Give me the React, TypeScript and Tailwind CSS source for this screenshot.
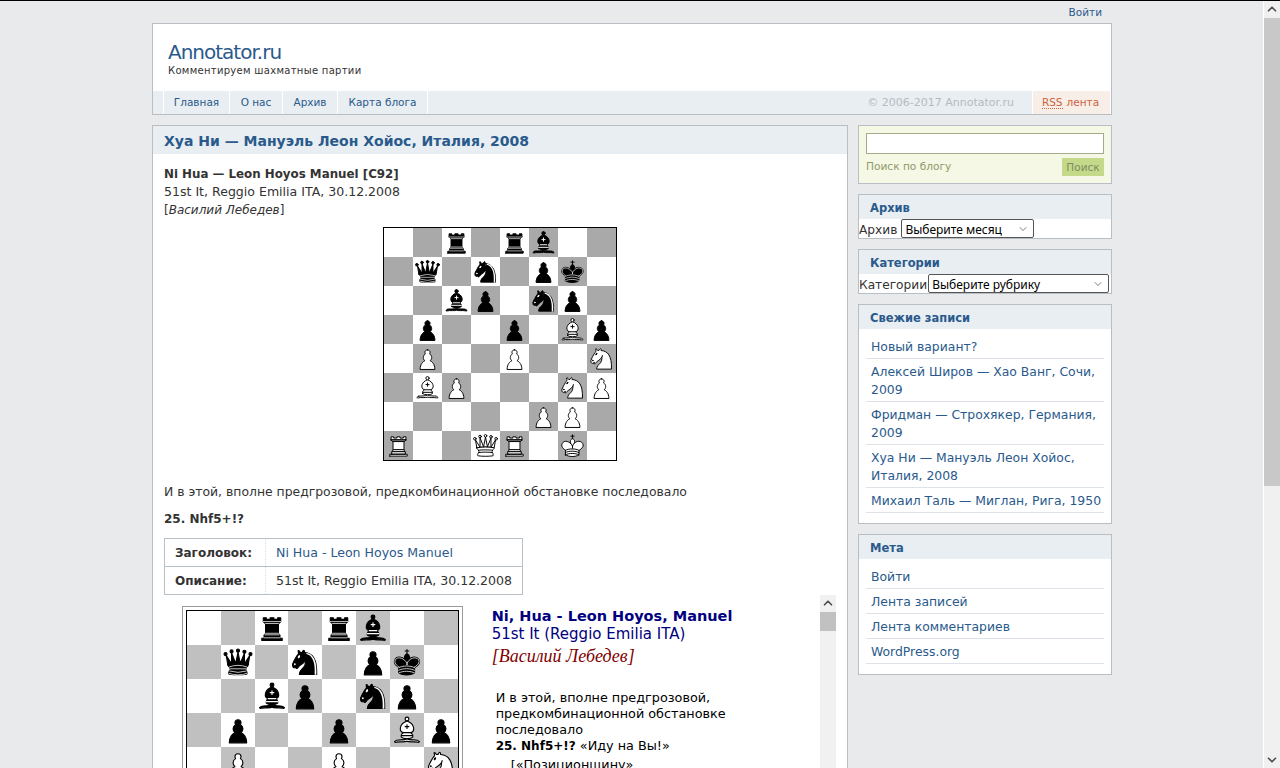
import React from 'react';
import { ChevronUp, ChevronDown } from 'lucide-react';

const position = [
  '..r.rb..',
  '.q.n.pk.',
  '..bp.np.',
  '.p..p.Bp',
  '.P..P..N',
  '.BP...NP',
  '.....PP.',
  'R..QR.K.',
];

const Piece: React.FC<{ kind: string; className: string }> = ({ kind, className }) => {
  const isWhite = kind === kind.toUpperCase();
  const fill = isWhite ? '#fff' : '#000';
  const detail = isWhite ? '#000' : '#fff';
  const type = kind.toLowerCase();

  return (
    <svg viewBox="0 0 45 45" className={className} fill={fill} stroke="#000" strokeWidth={1.5} strokeLinecap="round" strokeLinejoin="round">
      {type === 'p' && (
        <path d="M22.5 9c-2.21 0-4 1.79-4 4 0 .89.29 1.71.78 2.38C17.33 16.5 16 18.59 16 21c0 2.03.94 3.84 2.41 5.03-3 1.06-7.41 5.55-7.41 13.47h23c0-7.92-4.41-12.41-7.41-13.47 1.47-1.19 2.41-3 2.41-5.03 0-2.41-1.33-4.5-3.28-5.62.49-.67.78-1.49.78-2.38 0-2.21-1.79-4-4-4z" />
      )}
      {type === 'r' && (
        <>
          <path d="M9 39h27v-3H9v3zM12 36v-4h21v4H12zM11 14V9h4v2h5V9h5v2h5V9h4v5z" />
          <path d="M34 14l-3 3H14l-3-3z" />
          <path d="M31 17v12.5H14V17z" />
          <path d="M31 29.5l1.5 2.5h-20l1.5-2.5z" />
          {isWhite ? (
            <path d="M11 14h23" fill="none" />
          ) : (
            <path d="M12 35.5h21M13 31.5h19M14 29.5h17M14 16.5h17M11 14h23" fill="none" stroke="#fff" strokeWidth={1} />
          )}
        </>
      )}
      {type === 'n' && (
        <>
          <path d="M22 10c10.5 1 16.5 8 16 29H15c0-9 10-6.5 8-21" />
          <path d="M24 18c.38 2.91-5.55 7.37-8 9-3 2-2.82 4.34-5 4-1.042-.94 1.41-3.04 0-3-1 0 .19 1.23-1 2-1 0-4.003 1-4-4 0-2 6-12 6-12s1.89-1.9 2-3.5c-.73-.994-.5-2-.5-3 1-1 3 2.5 3 2.5h2s.78-1.992 2.5-3c1 0 1 3 1 3" />
          <path d="M9.5 25.5a.5.5 0 1 1-1 0 .5.5 0 1 1 1 0zm5.433-9.75a.5 1.5 30 1 1-.866-.5.5 1.5 30 1 1 .866.5z" fill={detail} stroke={detail} />
          {!isWhite && (
            <path d="M24.55 10.4l-.45 1.45.5.15c3.15 1 5.65 2.49 7.9 6.75S35.75 29.06 35.25 39l-.05.5h2.25l.05-.5c.5-10.06-.88-16.85-3.25-21.34-2.37-4.49-5.79-6.64-9.19-7.16l-.51-.1z" fill="#fff" stroke="none" />
          )}
        </>
      )}
      {type === 'b' && (
        <>
          <path d="M9 36c3.39-.97 10.11.43 13.5-2 3.39 2.43 10.11 1.03 13.5 2 0 0 1.65.54 3 2-.68.97-1.65.99-3 .5-3.39-.97-10.11.46-13.5-1-3.39 1.46-10.11.03-13.5 1-1.35.49-2.32.47-3-.5 1.35-1.46 3-2 3-2z" />
          <path d="M15 32c2.5 2.5 12.5 2.5 15 0 .5-1.5 0-2 0-2 0-2.5-2.5-4-2.5-4 5.5-1.5 6-11.5-5-15.5-11 4-10.5 14-5 15.5 0 0-2.5 1.5-2.5 4 0 0-.5.5 0 2z" />
          <path d="M25 8a2.5 2.5 0 1 1-5 0 2.5 2.5 0 1 1 5 0z" />
          <path d="M17.5 26h10M15 30h15m-7.5-14.5v5M20 18h5" fill="none" stroke={detail} strokeLinejoin="miter" />
        </>
      )}
      {type === 'q' && (
        <>
          <path d="M8 12a2 2 0 1 1-4 0 2 2 0 1 1 4 0zM24.5 7.5a2 2 0 1 1-4 0 2 2 0 1 1 4 0zM41 12a2 2 0 1 1-4 0 2 2 0 1 1 4 0zM16 8.5a2 2 0 1 1-4 0 2 2 0 1 1 4 0zM33 9a2 2 0 1 1-4 0 2 2 0 1 1 4 0z" />
          <path d="M9 26c8.5-1.5 21-1.5 27 0l2-12-7 11V11l-5.5 13.5-3-15-3 15-5.5-14V25L7 14l2 12z" />
          <path d="M9 26c0 2 1.5 2 2.5 4 1 1.5 1 1 .5 3.5-1.5 1-1.5 2.5-1.5 2.5-1.5 1.5.5 2.5.5 2.5 6.5 1 16.5 1 23 0 0 0 1.5-1 0-2.5 0 0 .5-1.5-1-2.5-.5-2.5-.5-2 .5-3.5 1-2 2.5-2 2.5-4-8.5-1.5-18.5-1.5-27 0z" />
          {isWhite ? (
            <path d="M11.5 30c3.5-1 18.5-1 22 0M12 33.5c6-1 15-1 21 0" fill="none" />
          ) : (
            <path d="M11 29a32.4 32.4 0 0 1 23 0M12.5 31.5h20M11.5 34.5a35 35 0 0 0 22 0M10.5 37.5a35 35 0 0 0 24 0" fill="none" stroke="#fff" strokeWidth={1} />
          )}
        </>
      )}
      {type === 'k' && (
        <>
          <path d="M22.5 11.63V6M20 8h5" fill="none" strokeLinejoin="miter" />
          <path d="M22.5 25s4.5-7.5 3-10.5c0 0-1-2.5-3-2.5s-3 2.5-3 2.5c-1.5 3 3 10.5 3 10.5" strokeLinecap="butt" strokeLinejoin="miter" />
          <path d="M11.5 37c5.5 3.5 15.5 3.5 21 0v-7s9-4.5 6-10.5c-4-6.5-13.5-3.5-16 4V27v-3.5c-3.5-7.5-13-10.5-16-4-3 6 5 10 5 10V37z" />
          {isWhite ? (
            <path d="M11.5 30c5.5-3 15.5-3 21 0m-21 3.5c5.5-3 15.5-3 21 0m-21 3.5c5.5-3 15.5-3 21 0" fill="none" />
          ) : (
            <path d="M32 29.5s8.5-4 6.03-9.65C34.15 14 25 18 22.5 24.5l.01 2.1-.01-2.1C20 18 9.906 14 6.997 19.85c-2.497 5.65 4.853 9 4.853 9M11.5 30c5.5-3 15.5-3 21 0m-21 3.5c5.5-3 15.5-3 21 0m-21 3.5c5.5-3 15.5-3 21 0" fill="none" stroke="#fff" strokeWidth={1} />
          )}
        </>
      )}
    </svg>
  );
};

interface BoardProps {
  cellClass: string;
  darkClass: string;
}

const Board: React.FC<BoardProps> = ({ cellClass, darkClass }) => (
  <div className="grid grid-cols-8 w-fit">
    {position.flatMap((row, r) =>
      row.split('').map((piece, c) => (
        <div key={`${r}-${c}`} className={`${cellClass} ${(r + c) % 2 ? darkClass : 'bg-white'}`}>
          {piece !== '.' && <Piece kind={piece} className="h-full w-full" />}
        </div>
      ))
    )}
  </div>
);

const Widget: React.FC<{ title: string; children: React.ReactNode }> = ({ title, children }) => (
  <div className="border border-[#b8bec4] bg-white">
    <h3 className="h-6 bg-[#e8eef2] pl-[11px] text-[11.5px] leading-[26px] font-bold text-[#2a5a8c]">{title}</h3>
    {children}
  </div>
);

const LinkList: React.FC<{ items: string[] }> = ({ items }) => (
  <ul className="px-[7px] pt-[5px] pb-[10px]">
    {items.map((item) => (
      <li key={item} className="border-b border-[#dde3e8] pl-[5px] pt-1 pb-[2px] text-[12.4px] leading-[18px] text-[#2a5a8c]">
        {item}
      </li>
    ))}
  </ul>
);

const Dropdown: React.FC<{ label: string; width: string }> = ({ label, width }) => (
  <div className={`relative flex h-[19px] items-center rounded-[2px] border border-[#555] bg-white pl-[3px] pt-[3px] text-[12px] text-black [font-family:'Noto_Sans',sans-serif] ${width}`}>
    {label}
    <ChevronDown size={12} strokeWidth={1.5} className="absolute right-1 top-[3px] text-[#555]" />
  </div>
);

const App: React.FC = () => {
  return (
    <div className="flex h-[768px] flex-col overflow-hidden bg-[#e9eaec] [font-family:'DejaVu_Sans',sans-serif]">
      <div className="h-px bg-black" />
      <div className="flex min-h-0 flex-1">
        <div className="min-w-0 flex-1 overflow-hidden pl-[152px]">
          <div className="w-[960px]">
            <div className="flex h-[22px] items-center justify-end pt-[2px] pr-[10px] text-[10.5px] text-[#2a5a8c]">Войти</div>

            <header className="h-[92px] border border-[#b8bec4] bg-white">
              <div className="h-[67px] pl-[15px] pt-[15px]">
                <h1 className="text-[20px] leading-[26px] tracking-[-1px] text-[#2a5a8c]">Annotator.ru</h1>
                <p className="text-[10px] leading-[12px] tracking-[0.3px] text-[#333]">Комментируем шахматные партии</p>
              </div>
              <nav className="flex h-[23px] bg-[#e8eef2] text-[10.5px] text-[#2a5a8c]">
                <div className="w-[10px]" />
                {[
                  ['Главная', 'w-[66px]'],
                  ['О нас', 'w-[53px]'],
                  ['Архив', 'w-[55px]'],
                  ['Карта блога', 'w-[90px]'],
                ].map(([label, width]) => (
                  <span key={label} className={`flex items-center justify-center border-l border-white ${width}`}>
                    {label}
                  </span>
                ))}
                <span className="h-full w-px bg-white" />
                <span className="flex flex-1 items-center justify-end pt-px pr-[18px] text-[11px] text-[#b4bcc2]">© 2006-2017 Annotator.ru</span>
                <span className="flex w-[78px] items-center justify-center gap-1 border-l border-white bg-[#f7eee8] pr-[2px] text-[#d0623c]">
                  <span className="border-b border-dotted border-[#d0623c] leading-[12px]">RSS</span> лента
                </span>
                <span className="w-px bg-white" />
              </nav>
            </header>

            <div className="mt-[10px] flex gap-[10px]">
              <main className="h-[700px] w-[696px] border border-[#b8bec4] bg-white">
                <h2 className="h-7 bg-[#e8eef2] pl-[11px] text-[14px] leading-[30px] font-bold text-[#2a5a8c]">
                  Хуа Ни — Мануэль Леон Хойос, Италия, 2008
                </h2>
                <div className="px-[11px] pt-[11px] text-[12.55px] leading-[18px] text-[#333]">
                  <p className="text-[11.85px] font-bold">Ni Hua — Leon Hoyos Manuel [C92]</p>
                  <p>51st It, Reggio Emilia ITA, 30.12.2008</p>
                  <p className="text-[12px]">
                    [<em>Василий Лебедев</em>]
                  </p>

                  <div className="mx-auto mt-[8px] w-fit border border-black">
                    <Board cellClass="h-[29px] w-[29px]" darkClass="bg-[#a9a9a9]" />
                  </div>

                  <p className="mt-[22px] text-[12.4px]">И в этой, вполне предгрозовой, предкомбинационной обстановке последовало</p>
                  <p className="mt-[9px] text-[12px] font-bold">25. Nhf5+!?</p>

                  <table className="mt-[10px] border-collapse">
                    <tbody>
                      <tr className="h-7">
                        <th className="w-[101px] border border-r-0 border-[#b8c0c8] pl-[10px] text-left text-[12px] font-bold">Заголовок:</th>
                        <td className="w-[257px] border border-[#b8c0c8] pl-[10px] text-[#2a5a8c] [border-left:1px_dotted_#d8dde2]">Ni Hua - Leon Hoyos Manuel</td>
                      </tr>
                      <tr className="h-7">
                        <th className="border border-r-0 border-[#b8c0c8] pl-[10px] text-left text-[12px] font-bold">Описание:</th>
                        <td className="border border-[#b8c0c8] pl-[10px] [border-left:1px_dotted_#d8dde2]">51st It, Reggio Emilia ITA, 30.12.2008</td>
                      </tr>
                    </tbody>
                  </table>

                  <div className="flex">
                    <div className="flex flex-1 pl-[18px] pt-[11px]">
                      <div className="h-fit border border-[#999] p-[3px]">
                        <div className="border border-black">
                          <Board cellClass="h-[34px] w-[34px]" darkClass="bg-[#c0c0c0]" />
                        </div>
                      </div>
                      <div className="ml-[29px] w-[330px] pt-px text-black">
                        <p className="text-[14.5px] leading-[18px] font-bold text-[#000080]">Ni, Hua - Leon Hoyos, Manuel</p>
                        <p className="text-[15px] leading-[18px] text-[#000080]">51st It (Reggio Emilia ITA)</p>
                        <p className="mt-px text-[18px] leading-[24px] italic text-[#800000] [font-family:'Liberation_Serif',serif]">[Василий Лебедев]</p>
                        <div className="mt-[22px] w-[260px] pl-[4px] text-[12.8px] leading-[16px]">
                          <p>И в этой, вполне предгрозовой, предкомбинационной обстановке последовало</p>
                          <p>
                            <b className="text-[12px]">25. Nhf5+!?</b> «Иду на Вы!»
                          </p>
                          <p className="mt-[3px] pl-[15px]">[«Позиционщину»</p>
                        </div>
                      </div>
                    </div>
                    <div className="flex h-[400px] w-4 flex-col items-center bg-[#f1f1f1]">
                      <ChevronUp size={14} strokeWidth={3} className="mt-px text-[#505050]" />
                      <div className="mt-[2px] h-[19px] w-full bg-[#c1c1c1]" />
                    </div>
                  </div>
                </div>
              </main>

              <aside className="flex w-[254px] flex-col gap-[10px]">
                <div className="h-[59px] border border-[#b8bec4] bg-[#f5f8e5] px-[7px] pt-[7px]">
                  <div className="h-[21px] border border-[#a4ab8b] bg-white" />
                  <div className="mt-[4px] flex items-start justify-between">
                    <span className="text-[10.6px] leading-[16px] text-[#8f9a6a]">Поиск по блогу</span>
                    <span className="flex h-[18px] w-[42px] items-center justify-center bg-[#c5d98a] pt-[2px] text-[10.5px] text-[#7e8c5e]">Поиск</span>
                  </div>
                </div>

                <Widget title="Архив">
                  <div className="flex h-[19px] items-center text-[12.2px] text-[#333]">
                    <span className="pt-[3px]">Архив</span>
                    <div className="ml-[4px]">
                      <Dropdown label="Выберите месяц" width="w-[133px]" />
                    </div>
                  </div>
                </Widget>

                <Widget title="Категории">
                  <div className="flex h-[19px] items-center text-[12.2px] text-[#333]">
                    <span className="pt-[3px]">Категории</span>
                    <div className="ml-px">
                      <Dropdown label="Выберите рубрику" width="w-[181px]" />
                    </div>
                  </div>
                </Widget>

                <Widget title="Свежие записи">
                  <LinkList
                    items={[
                      'Новый вариант?',
                      'Алексей Широв — Хао Ванг, Сочи, 2009',
                      'Фридман — Строхякер, Германия, 2009',
                      'Хуа Ни — Мануэль Леон Хойос, Италия, 2008',
                      'Михаил Таль — Миглан, Рига, 1950',
                    ]}
                  />
                </Widget>

                <Widget title="Мета">
                  <LinkList items={['Войти', 'Лента записей', 'Лента комментариев', 'WordPress.org']} />
                </Widget>
              </aside>
            </div>
          </div>
        </div>

        <div className="flex w-[17px] flex-col items-center border-l border-white bg-[#f0f0f0]">
          <ChevronUp size={14} strokeWidth={3} className="mt-px shrink-0 text-[#505050]" />
          <div className="mt-[2px] h-[468px] w-full shrink-0 bg-[#c8c8c8]" />
          <ChevronDown size={14} strokeWidth={3} className="mt-auto mb-px shrink-0 text-[#505050]" />
        </div>
      </div>
    </div>
  );
};

export default App;
